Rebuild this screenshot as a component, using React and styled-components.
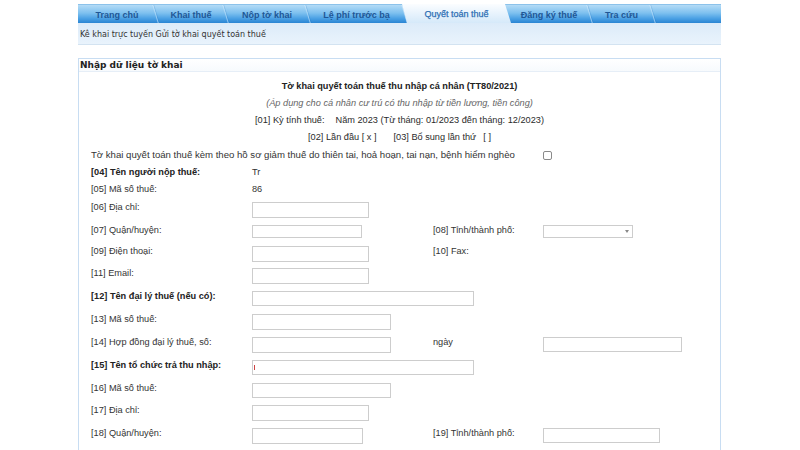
import React from 'react'
import styled, { createGlobalStyle, css } from 'styled-components'

const GlobalStyle = createGlobalStyle`
  html, body {
    margin: 0;
    padding: 0;
    background: #fff;
    overflow: hidden;
  }
  body {
    font-family: "Liberation Sans", Arial, sans-serif;
    color: #2b2b2b;
  }
`

const tabs = [
  { label: 'Trang chủ', w: 78 },
  { label: 'Khai thuế', w: 70 },
  { label: 'Nộp tờ khai', w: 82 },
  { label: 'Lệ phí trước bạ', w: 97 },
  { label: 'Quyết toán thuế', w: 103, active: true },
  { label: 'Đăng ký thuế', w: 82 },
  { label: 'Tra cứu', w: 63 },
]

const Page = styled.div`
  width: 643px;
  margin-left: 78px;
  padding-top: 4px;
`

const TabBar = styled.ul`
  display: flex;
  margin: 0;
  padding: 0;
  list-style: none;
  height: 19px;
  box-sizing: border-box;
  background: linear-gradient(#b4dbf6 0%, #7dc0ef 45%, #4aa0e4 75%, #2a85d3 100%);
  border-top: 1px solid #8cc2ea;
`

const Tab = styled.li`
  position: relative;
  flex: none;
  width: ${p => p.$w}px;
  display: flex;
  align-items: center;
  justify-content: center;
  font: bold 9px "Liberation Sans", Arial, sans-serif;
  color: #1f5796;
  padding-top: 1px;
  box-sizing: border-box;

  &::after {
    content: '';
    position: absolute;
    right: 0;
    top: 0;
    bottom: 0;
    width: 1px;
    background: linear-gradient(rgba(255, 255, 255, 0.3), rgba(190, 225, 250, 0.7));
    box-shadow: 1px 0 0 rgba(30, 110, 190, 0.2);
    transform: skewX(17deg);
  }

  ${p => p.$active && css`
    width: ${p.$w + 6}px;
    margin: -1px -3px 0 -3px;
    height: 19px;
    z-index: 1;
    font-weight: normal;
    -webkit-text-stroke: 0.25px #2e6fb4;
    color: #2e6fb4;
    background: linear-gradient(#fbfdff, #e4f1fc 60%, #d5e9f9);
    clip-path: polygon(0 0, calc(100% - 6px) 0, 100% 100%, 5px 100%);
    &::after { display: none; }
  `}
`

const SubNav = styled.div`
  height: 22px;
  box-sizing: border-box;
  display: flex;
  align-items: center;
  padding: 1px 0 0 2px;
  background: linear-gradient(#dcebf9, #e9f3fc);
  border-bottom: 1px solid #d3e3f1;
  font: 8px "DejaVu Sans", Verdana, sans-serif;
  color: #333;
`

const Panel = styled.section`
  margin-top: 13px;
  border: 1px solid #c8ddf2;
  border-bottom: none;
  height: 420px;
`

const PanelHeader = styled.h2`
  margin: 0;
  height: 12px;
  line-height: 12px;
  padding-left: 1px;
  font: bold 9px/12px "DejaVu Sans", Verdana, sans-serif;
  color: #222;
  border-bottom: 1px solid #e6eef7;
  background: linear-gradient(#ffffff, #f7fafd);
`

const Body = styled.div`
  padding-top: 6px;
  font-size: 9.2px;
`

const CenterLine = styled.p`
  margin: 0;
  height: 17px;
  line-height: 17px;
  text-align: center;
  white-space: pre;
  ${p => p.$bold && css`font-weight: bold; color: #222;`}
  ${p => p.$italic && css`font-style: italic; color: #666;`}
`

const Gap = styled.span`
  display: inline-block;
  width: ${p => p.$w}px;
`

const Row = styled.div`
  display: grid;
  grid-template-columns: 161px 181px 110px 1fr;
  align-items: start;
  height: ${p => p.$h || 23}px;
  padding-left: 12px;
`

const Label = styled.span`
  line-height: ${p => p.$lh || 11}px;
  color: #333;
  white-space: nowrap;
  ${p => p.$bold && css`font-weight: bold; color: #222;`}
`

const Value = styled.span`
  line-height: 17px;
  color: #333;
`

const WideText = styled.span`
  grid-column: 1 / 4;
  line-height: 18px;
  font-size: 9.6px;
  color: #333;
  white-space: nowrap;
`

const Check = styled.span`
  margin-top: 5px;
  width: 9px;
  height: 9px;
  box-sizing: border-box;
  border: 1px solid #8a8a8a;
  border-radius: 2px;
  background: #fff;
`

const Field = styled.div`
  position: relative;
  width: ${p => p.$w}px;
  height: ${p => p.$h || 16}px;
  box-sizing: border-box;
  border: 1px solid #cdcdcd;
  background: #fff;
`

const Caret = styled.span`
  position: absolute;
  left: 1px;
  top: 4px;
  width: 1px;
  height: 5px;
  background: #c44;
`

const SelectArrow = styled.svg`
  position: absolute;
  right: 3px;
  top: 4px;
`

const Select = ({ w }) => (
  <Field $w={w} $h={13}>
    <SelectArrow width="4" height="3" viewBox="0 0 4 3">
      <path d="M0 0 L4 0 L2 3 Z" fill="#888" />
    </SelectArrow>
  </Field>
)

export default function App() {
  return (
    <>
      <GlobalStyle />
      <Page>
        <TabBar>
          {tabs.map(t => (
            <Tab key={t.label} $w={t.w} $active={t.active}>{t.label}</Tab>
          ))}
        </TabBar>
        <SubNav>Kê khai trực tuyến Gửi tờ khai quyết toán thuế</SubNav>

        <Panel>
          <PanelHeader>Nhập dữ liệu tờ khai</PanelHeader>
          <Body>
            <CenterLine $bold>Tờ khai quyết toán thuế thu nhập cá nhân (TT80/2021)</CenterLine>
            <CenterLine $italic>(Áp dụng cho cá nhân cư trú có thu nhập từ tiền lương, tiền công)</CenterLine>
            <CenterLine>
              [01] Kỳ tính thuế:<Gap $w={11} />Năm 2023 (Từ tháng: 01/2023 đến tháng: 12/2023)
            </CenterLine>
            <CenterLine>
              [02] Lần đầu [ x ]<Gap $w={17} />[03] Bổ sung lần thứ<Gap $w={7} />[ ]
            </CenterLine>

            <Row $h={18}>
              <WideText>
                Tờ khai quyết toán thuế kèm theo hồ sơ giảm thuế do thiên tai, hoả hoạn, tai nạn, bệnh hiểm nghèo
              </WideText>
              <Check />
            </Row>

            <Row $h={17}>
              <Label $bold $lh={17}>[04] Tên người nộp thuế:</Label>
              <Value>Tr</Value>
            </Row>
            <Row $h={21}>
              <Label $lh={17}>[05] Mã số thuế:</Label>
              <Value>86</Value>
            </Row>
            <Row>
              <Label>[06] Địa chỉ:</Label>
              <Field $w={117} />
            </Row>
            <Row $h={21}>
              <Label>[07] Quận/huyện:</Label>
              <Field $w={110} $h={13} />
              <Label>[08] Tỉnh/thành phố:</Label>
              <Select w={90} />
            </Row>
            <Row $h={22}>
              <Label>[09] Điện thoại:</Label>
              <Field $w={117} />
              <Label>[10] Fax:</Label>
            </Row>
            <Row>
              <Label>[11] Email:</Label>
              <Field $w={117} />
            </Row>
            <Row>
              <Label $bold>[12] Tên đại lý thuế (nếu có):</Label>
              <Field $w={222} $h={15} />
            </Row>
            <Row>
              <Label>[13] Mã số thuế:</Label>
              <Field $w={139} />
            </Row>
            <Row>
              <Label>[14] Hợp đồng đại lý thuế, số:</Label>
              <Field $w={139} />
              <Label>ngày</Label>
              <Field $w={139} $h={15} />
            </Row>
            <Row>
              <Label $bold>[15] Tên tổ chức trả thu nhập:</Label>
              <Field $w={222} $h={15}><Caret /></Field>
            </Row>
            <Row $h={22}>
              <Label>[16] Mã số thuế:</Label>
              <Field $w={139} $h={15} />
            </Row>
            <Row>
              <Label>[17] Địa chỉ:</Label>
              <Field $w={117} />
            </Row>
            <Row>
              <Label>[18] Quận/huyện:</Label>
              <Field $w={111} />
              <Label>[19] Tỉnh/thành phố:</Label>
              <Field $w={117} $h={15} />
            </Row>
          </Body>
        </Panel>
      </Page>
    </>
  )
}
